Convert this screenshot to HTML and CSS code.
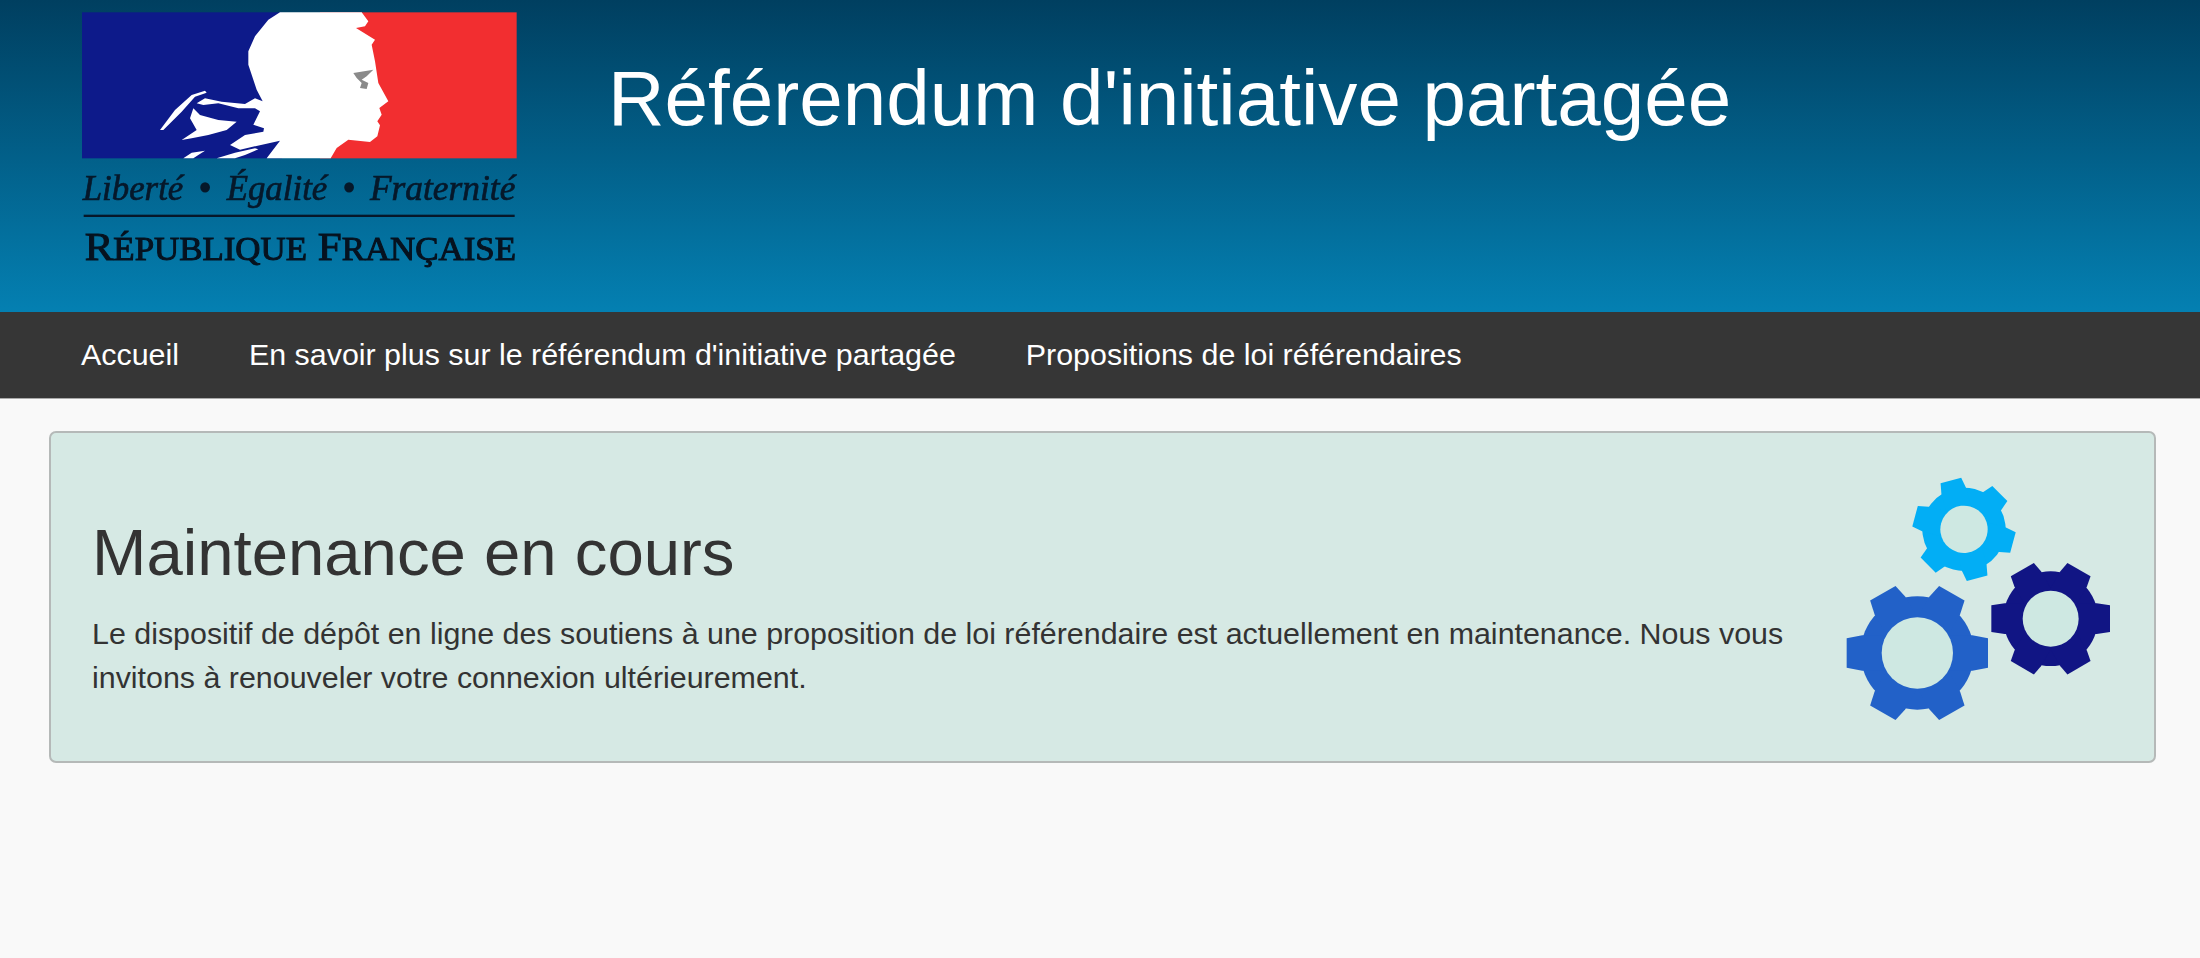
FILE: index.html
```html
<!DOCTYPE html>
<html lang="fr">
<head>
<meta charset="utf-8">
<title>Référendum d'initiative partagée</title>
<link rel="stylesheet" href="styles.css">
</head>
<body>
<header class="masthead">
  <svg class="logo" viewBox="66 36 1305 765" width="435" height="255" role="img" aria-label="République française">
    <rect x="66" y="37" width="600" height="438" fill="#0d1a8a"/>
    <rect x="780" y="37" width="590" height="438" fill="#f22e30"/>
    <path fill="#fff" d="M660 37H905L925 64L915 79L888 84L945 119L935 134L945 184L955 249L985 304L958 324L965 344L952 364L960 376L952 409L930 426L865 419L830 444L812 475H620L660 422L540 449L510 435L555 405L610 395L612 385L580 374L600 334L585 325L535 325L475 310L430 315L410 310L435 295L485 305L555 312L585 295L608 304L590 269L565 194L565 154L585 109L625 59Z"/>
    <path fill="#fff" d="M300 390L345 330L395 285L435 272L440 278L405 290L365 335L310 390Z"/>
    <path fill="#fff" d="M365 420L410 390L390 355L400 325L420 345L475 360L530 365L500 390L445 405L395 415Z"/>
    <path fill="#fff" d="M370 475L395 458L435 452L415 465L400 475Z"/>
    <path fill="#fff" d="M470 475L525 458L585 445L595 448L555 465L525 475Z"/>
    <path fill="#8a8a8a" d="M880 219L940 209L920 229L905 239L925 249L920 267L900 264L905 249L890 234Z"/>
    <text class="logo-motto" x="68" y="600" textLength="302" lengthAdjust="spacingAndGlyphs">Liberté</text>
    <text class="logo-motto logo-dot" x="416" y="600" textLength="36" lengthAdjust="spacingAndGlyphs">•</text>
    <text class="logo-motto" x="500" y="600" textLength="302" lengthAdjust="spacingAndGlyphs">Égalité</text>
    <text class="logo-motto logo-dot" x="848" y="600" textLength="36" lengthAdjust="spacingAndGlyphs">•</text>
    <text class="logo-motto" x="930" y="600" textLength="436" lengthAdjust="spacingAndGlyphs">Fraternité</text>
    <rect x="71" y="644" width="1293" height="7" fill="#06182a"/>
    <text class="logo-name" x="74" y="780" textLength="1294" lengthAdjust="spacingAndGlyphs">R<tspan class="logo-small">ÉPUBLIQUE</tspan> F<tspan class="logo-small">RANÇAISE</tspan></text>
  </svg>
  <h1 class="site-title">Référendum d'initiative partagée</h1>
</header>
<nav class="main-nav">
  <a class="nav-link" href="#">Accueil</a>
  <a class="nav-link" href="#">En savoir plus sur le référendum d'initiative partagée</a>
  <a class="nav-link" href="#">Propositions de loi référendaires</a>
</nav>
<main class="content">
  <section class="notice">
    <div class="notice-text">
      <h2 class="notice-title">Maintenance en cours</h2>
      <p class="notice-body">Le dispositif de dépôt en ligne des soutiens à une proposition de loi référendaire est actuellement en maintenance. Nous vous invitons à renouveler votre connexion ultérieurement.</p>
    </div>
    <svg class="gears" viewBox="0 0 900 840" width="300" height="280" aria-hidden="true">
      <g transform="translate(292 579)" fill="#2261c8">
        <circle r="170"/>
        <polygon points="-212,-44 -165,-53 165,-53 212,-44 212,44 165,53 -165,53 -212,44"/>
        <polygon points="-207,-44 -165,-53 165,-53 207,-44 207,44 165,53 -165,53 -207,44" transform="rotate(60)"/>
        <polygon points="-207,-44 -165,-53 165,-53 207,-44 207,44 165,53 -165,53 -207,44" transform="rotate(120)"/>
        <circle r="107" fill="#cee8e2"/>
      </g>
      <g transform="translate(692 476)" fill="#111584">
        <circle r="142"/>
        <polygon points="-178,-40 -138,-46 138,-46 178,-40 178,40 138,46 -138,46 -178,40"/>
        <polygon points="-170,-40 -138,-46 138,-46 170,-40 170,40 138,46 -138,46 -170,40" transform="rotate(60)"/>
        <polygon points="-170,-40 -138,-46 138,-46 170,-40 170,40 138,46 -138,46 -170,40" transform="rotate(120)"/>
        <circle r="84" fill="#cee8e2"/>
      </g>
      <g transform="translate(432 208) rotate(15)" fill="#02aef5">
        <circle r="125"/>
        <polygon points="-152,-32 -120,-38 120,-38 152,-32 152,32 120,38 -120,38 -152,32"/>
        <polygon points="-152,-32 -120,-38 120,-38 152,-32 152,32 120,38 -120,38 -152,32" transform="rotate(60)"/>
        <polygon points="-152,-32 -120,-38 120,-38 152,-32 152,32 120,38 -120,38 -152,32" transform="rotate(120)"/>
        <circle r="71" fill="#cee8e2"/>
      </g>
    </svg>
  </section>
</main>
</body>
</html>
```

FILE: styles.css
```css
* { box-sizing: border-box; }
html, body { margin: 0; height: 100%; }
body {
  background: #f9f9f9;
  color: #333;
  font-family: "Liberation Sans", Arial, sans-serif;
  overflow: hidden;
}
.masthead {
  height: 312px;
  padding: 12px 0 0 82px;
  display: flex;
  align-items: flex-start;
  gap: 91px;
  background: linear-gradient(180deg, #003f60 0%, #0480b2 100%);
}
.logo { display: block; flex: none; overflow: visible; filter: blur(0.5px); }
.logo-motto {
  font-family: "Liberation Serif", serif;
  font-style: italic;
  font-size: 106px;
  fill: #06182a;
  stroke: #06182a;
  stroke-width: 2px;
}
.logo-dot { stroke-width: 5px; }
.logo-name {
  font-family: "Liberation Serif", serif;
  font-size: 121px;
  fill: #06121f;
  stroke: #06121f;
  stroke-width: 3px;
}
.logo-small { font-size: 98px; }
.site-title {
  margin: 36px 0 0;
  color: #fff;
  font-size: 78.2px;
  font-weight: 400;
  line-height: 100px;
}
.main-nav {
  height: 87px;
  padding: 0 0 2px 81px;
  display: flex;
  align-items: center;
  gap: 70px;
  background: #363636;
  border-bottom: 1px solid #aaa;
}
.nav-link {
  color: #fff;
  font-size: 30.4px;
  text-decoration: none;
}
.content { padding: 32px 44px 0 49px; }
.notice {
  height: 332px;
  padding: 0 34px 0 41px;
  display: flex;
  align-items: center;
  justify-content: space-between;
  background: #d6e9e4;
  border: 2px solid #b5b9b8;
  border-radius: 7px;
}
.notice-text { width: 1730px; margin-top: 18px; }
.notice-title {
  margin: 0 0 18px;
  font-size: 65.3px;
  font-weight: 400;
  line-height: 80px;
}
.notice-body {
  margin: 0;
  font-size: 30.4px;
  line-height: 44px;
}
.gears { display: block; flex: none; margin-top: 6px; }
```
